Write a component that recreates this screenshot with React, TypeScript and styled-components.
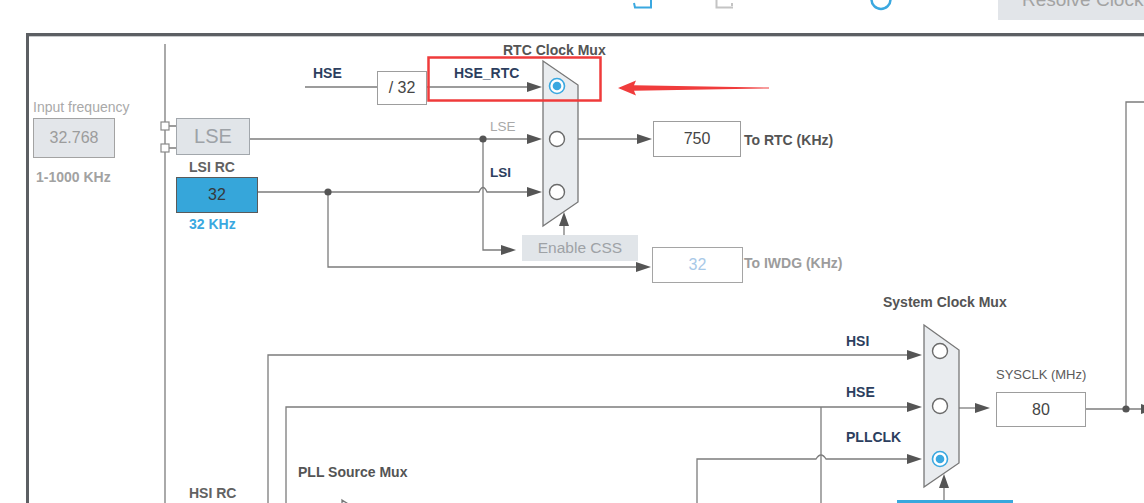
import React from 'react';
import styled, { createGlobalStyle, css } from 'styled-components';

const GlobalStyle = createGlobalStyle`
  html, body { margin: 0; padding: 0; background: #ffffff; overflow: hidden; }
  body { font-family: "Liberation Sans", Arial, sans-serif; }
  #root { width: 1144px; height: 503px; }
`;

/* Diagram canvas origin (inside the frame border) in page coordinates */
const OX = 29;
const OY = 36;

const Page = styled.div`
  width: 1144px;
  height: 503px;
  display: flex;
  flex-direction: column;
  overflow: hidden;
  background: #fff;
`;

const Toolbar = styled.header`
  height: 33px;
  flex-shrink: 0;
  display: flex;
  align-items: flex-start;
  padding-left: 633px;
  overflow: hidden;
`;

const ToolIcon = styled.svg<{ $gap?: number }>`
  display: block;
  flex-shrink: 0;
  margin-left: ${(p) => p.$gap ?? 0}px;
`;

const ResolveButton = styled.button`
  margin-left: auto;
  margin-top: -21px;
  width: 146px;
  height: 41px;
  flex-shrink: 0;
  border: none;
  background: #e2e5e9;
  color: #a3a3a3;
  font-family: "Liberation Sans", Arial, sans-serif;
  font-size: 19px;
  line-height: 41px;
  text-align: left;
  padding: 0 0 0 24px;
  white-space: nowrap;
  overflow: hidden;
`;

const Frame = styled.section`
  flex: 1;
  margin-left: 26px;
  border-left: 3px solid #5c5f63;
  border-top: 3px solid #5c5f63;
  box-shadow: inset 0 1px 0 #c8cacc;
  min-height: 0;
`;

const Diagram = styled.div`
  position: relative;
  width: 100%;
  height: 100%;
  overflow: hidden;
`;

const Wires = styled.svg`
  position: absolute;
  left: 0;
  top: 0;
  display: block;
`;

type Pos = { $x: number; $y: number };

const placed = css<Pos>`
  position: absolute;
  left: ${(p) => p.$x - OX}px;
  top: ${(p) => p.$y - OY}px;
`;

type BoxVariant = 'input' | 'source' | 'active' | 'output' | 'faded' | 'control' | 'selector';

const boxLook: Record<BoxVariant, string> = {
  input: 'background:#e3e6ea; border:1px solid #a3a3a3; color:#9c9c9c; font-size:16px;',
  source: 'background:#e1e5e9; border:1px solid #a2a7ac; color:#9da2a7; font-size:20px;',
  active: 'background:#36a6da; border:1px solid #5a5a5a; color:#35393d; font-size:16px;',
  output: 'background:#ffffff; border:1px solid #9d9d9d; color:#454545; font-size:16px;',
  faded: 'background:#ffffff; border:1px solid #a5a5a5; color:#a8c9e8; font-size:16px;',
  control: 'background:#e1e5e9; border:none; color:#9ea2a6; font-size:15.5px;',
  selector: 'background:#38a8dd; border:none; color:#333; font-size:16px;',
};

const ValueBox = styled.div<Pos & { $w: number; $h: number; $variant: BoxVariant }>`
  ${placed};
  width: ${(p) => p.$w}px;
  height: ${(p) => p.$h}px;
  box-sizing: border-box;
  display: flex;
  align-items: center;
  justify-content: center;
  white-space: nowrap;
  ${(p) => boxLook[p.$variant]}
`;

type Tone = 'navy' | 'title' | 'muted' | 'mutedBold' | 'caption' | 'blue' | 'plain' | 'faint';

const toneLook: Record<Tone, string> = {
  navy: 'color:#2c3e5e; font-weight:700;',
  title: 'color:#545454; font-weight:700;',
  muted: 'color:#a9a9a9; font-weight:400;',
  mutedBold: 'color:#a2a2a2; font-weight:700;',
  caption: 'color:#626262; font-weight:700;',
  blue: 'color:#3aa8e0; font-weight:700;',
  plain: 'color:#5a5a5a; font-weight:400;',
  faint: 'color:#9c9c9c; font-weight:700;',
};

const Label = styled.span<Pos & { $tone: Tone; $size?: number }>`
  ${placed};
  font-size: ${(p) => p.$size ?? 14}px;
  line-height: 16px;
  white-space: nowrap;
  ${(p) => toneLook[p.$tone]}
`;

/* drawing helpers */
const arrowRight = (tx: number, y: number) => `M${tx - 15} ${y - 5} L${tx} ${y} L${tx - 15} ${y + 5} Z`;
const arrowUp = (x: number, ty: number) => `M${x - 5} ${ty + 14} L${x} ${ty} L${x + 5} ${ty + 14} Z`;

const Radio: React.FC<{ cx: number; cy: number; on?: boolean }> = ({ cx, cy, on }) =>
  on ? (
    <g>
      <circle cx={cx} cy={cy} r={7.5} fill="#fff" stroke="#3aa8e0" strokeWidth={1.6} />
      <circle cx={cx} cy={cy} r={4.3} fill="#3aa8e0" />
    </g>
  ) : (
    <circle cx={cx} cy={cy} r={7.5} fill="#fff" stroke="#6a6a6a" strokeWidth={1.4} />
  );

const label = (cy: number) => cy - 8;

export default function App() {
  const rightArrows: [number, number][] = [
    [542, 87],
    [542, 139],
    [542, 192],
    [652, 139],
    [516, 250],
    [651, 267],
    [922, 355],
    [922, 407],
    [922, 459],
    [990, 408],
    [1156, 409],
  ];

  return (
    <>
      <GlobalStyle />
      <Page>
        <Toolbar>
          <ToolIcon width={20} height={9} viewBox="0 0 20 9">
            <path d="M1 3 L2 7.5 H18 V0" fill="none" stroke="#3aa8e0" strokeWidth={2} />
          </ToolIcon>
          <ToolIcon $gap={62} width={20} height={9} viewBox="0 0 20 9">
            <path d="M1.5 0 V7.5 H18 M17 3 V6" fill="none" stroke="#c4c4c4" strokeWidth={2} />
          </ToolIcon>
          <ToolIcon $gap={135} width={22} height={12} viewBox="0 0 22 12">
            <circle cx={11} cy={-0.5} r={9.5} fill="none" stroke="#3aa8e0" strokeWidth={2.5} />
          </ToolIcon>
          <ResolveButton>Resolve Clock</ResolveButton>
        </Toolbar>

        <Frame>
          <Diagram>
            <Wires width={1115} height={467} viewBox={`${OX} ${OY} 1115 467`}>
              <g stroke="#7c7c7c" strokeWidth={1.3} fill="none">
                <path d="M165 44 V503" />
                <path d="M169 126 H176 M169 148 H176" />
                <path d="M305 87 H377 M426 87 H528" />
                <path d="M249 139 H528" />
                <path d="M257 192 H479 Q483 183 487 192 H528" />
                <path d="M483 139 V250 H502" />
                <path d="M328 192 V267 H637" />
                <path d="M578 139 H638" />
                <path d="M564 235 V225" />
                <path d="M268 503 V355 H908" />
                <path d="M286 503 V407 H908" />
                <path d="M821 407 V503" />
                <path d="M697 503 V459 H816 Q821 451 826 459 H908" />
                <path d="M959 408 H976" />
                <path d="M1085 409 H1142" />
                <path d="M1126 409 V102 H1144" />
                <path d="M944 487 V500" />
              </g>

              <rect x={161} y={122} width={8} height={8} fill="#fff" stroke="#8a8a8a" strokeWidth={1.2} />
              <rect x={161} y={144} width={8} height={8} fill="#fff" stroke="#8a8a8a" strokeWidth={1.2} />

              <polygon
                points="543,61 578,85 578,202 543,226"
                fill="#e9ecef"
                stroke="#777"
                strokeWidth={1.3}
              />
              <polygon
                points="924,325 959,350 959,463 924,487"
                fill="#e9ecef"
                stroke="#777"
                strokeWidth={1.3}
              />
              <polygon points="342,500 377,522 377,560 342,580" fill="#e9ecef" stroke="#777" strokeWidth={1.3} />

              <Radio cx={557} cy={86} on />
              <Radio cx={557} cy={139} />
              <Radio cx={557} cy={192} />
              <Radio cx={940} cy={351} />
              <Radio cx={940} cy={406} />
              <Radio cx={940} cy={459} on />

              <g fill="#555">
                {rightArrows.map(([x, y]) => (
                  <path key={`${x}-${y}`} d={arrowRight(x, y)} />
                ))}
                <path d={arrowUp(564, 212)} />
                <path d={arrowUp(944, 474)} />
                <circle cx={483} cy={139} r={3.6} />
                <circle cx={328} cy={192} r={3.6} />
                <circle cx={1126} cy={409} r={3.6} />
              </g>

              <rect x={428.5} y={57.5} width={172} height={43} fill="none" stroke="#ef3b3b" strokeWidth={2.5} />
              <path d="M618 88 L636 80.5 L634 85.3 L769 87.5 L769 88.5 L634 90.8 L636 95.5 Z" fill="#f03c3c" />
            </Wires>

            <Label $tone="muted" $x={33} $y={label(107)}>Input frequency</Label>
            <ValueBox $variant="input" $x={33} $y={118} $w={82} $h={40}>32.768</ValueBox>
            <Label $tone="mutedBold" $x={36} $y={label(177)}>1-1000 KHz</Label>

            <ValueBox $variant="source" $x={176} $y={118} $w={74} $h={37}>LSE</ValueBox>
            <Label $tone="caption" $x={189} $y={label(167)}>LSI RC</Label>
            <ValueBox $variant="active" $x={176} $y={177} $w={82} $h={36}>32</ValueBox>
            <Label $tone="blue" $x={189} $y={label(224)}>32 KHz</Label>

            <Label $tone="navy" $x={313} $y={label(73)}>HSE</Label>
            <ValueBox $variant="output" $x={377} $y={71} $w={50} $h={34}>/ 32</ValueBox>
            <Label $tone="navy" $x={454} $y={label(73)}>HSE_RTC</Label>
            <Label $tone="title" $x={503} $y={label(50)}>RTC Clock Mux</Label>
            <Label $tone="muted" $x={490} $y={label(127)} $size={13.5}>LSE</Label>
            <Label $tone="navy" $x={490} $y={label(173)} $size={13.5}>LSI</Label>

            <ValueBox $variant="output" $x={653} $y={121} $w={88} $h={36}>750</ValueBox>
            <Label $tone="title" $x={744} $y={label(140)}>To RTC (KHz)</Label>

            <ValueBox $variant="control" $x={522} $y={235} $w={116} $h={26}>Enable CSS</ValueBox>
            <ValueBox $variant="faded" $x={652} $y={247} $w={91} $h={36}>32</ValueBox>
            <Label $tone="faint" $x={744} $y={label(263)}>To IWDG (KHz)</Label>

            <Label $tone="title" $x={883} $y={label(302)}>System Clock Mux</Label>
            <Label $tone="navy" $x={846} $y={label(341)}>HSI</Label>
            <Label $tone="navy" $x={846} $y={label(392)}>HSE</Label>
            <Label $tone="navy" $x={846} $y={label(437)}>PLLCLK</Label>
            <Label $tone="plain" $x={996} $y={label(375)} $size={13}>SYSCLK (MHz)</Label>
            <ValueBox $variant="output" $x={996} $y={392} $w={90} $h={35}>80</ValueBox>

            <Label $tone="title" $x={298} $y={label(472)}>PLL Source Mux</Label>
            <Label $tone="caption" $x={189} $y={label(493)}>HSI RC</Label>
            <ValueBox $variant="selector" $x={897} $y={500} $w={116} $h={30} />
          </Diagram>
        </Frame>
      </Page>
    </>
  );
}
